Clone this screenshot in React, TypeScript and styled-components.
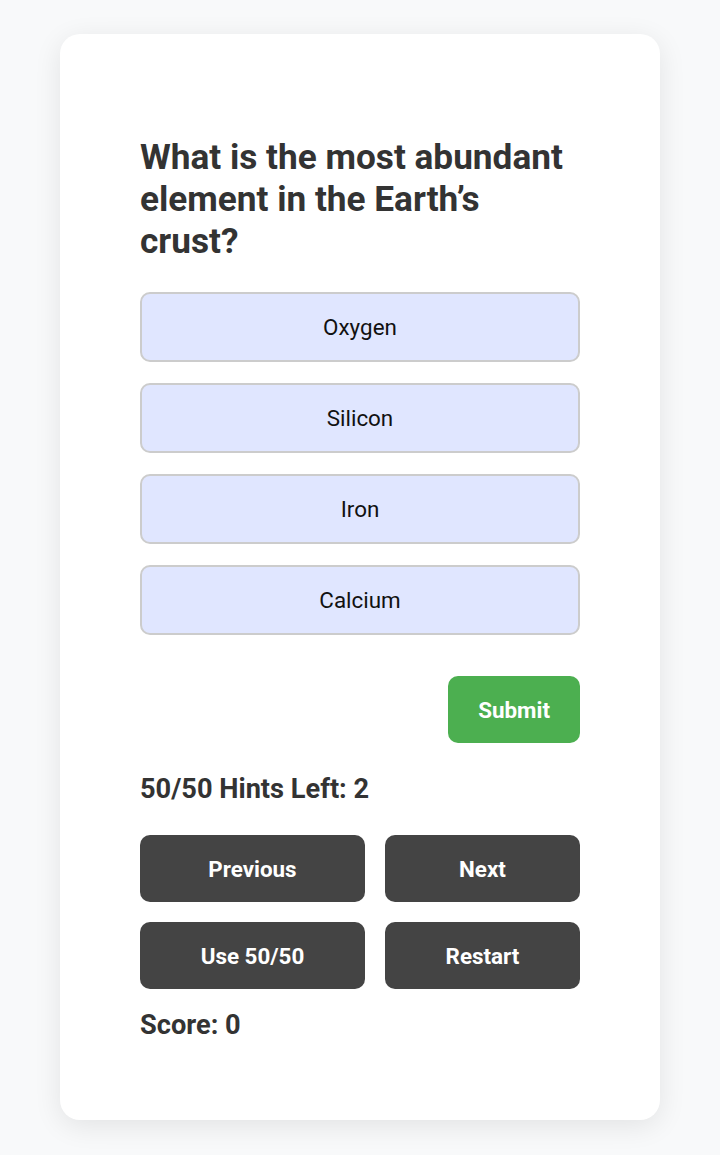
import React, { useState } from "react";
import styled, { createGlobalStyle } from "styled-components";

const GlobalStyle = createGlobalStyle`
  html, body {
    margin: 0;
    padding: 0;
    background: #f8f9fa;
    font-family: Roboto, "Liberation Sans", Arial, sans-serif;
  }
  * { box-sizing: border-box; }
`;

const Page = styled.div`
  display: flex;
  justify-content: center;
  padding: 34px 0 35px;
`;

const Card = styled.div`
  width: 600px;
  background: #ffffff;
  border-radius: 20px;
  box-shadow: 0 6px 28px rgba(0, 0, 0, 0.09);
  padding: 102px 80px 79px;
  display: flex;
  flex-direction: column;
`;

const Question = styled.h2`
  margin: 0 0 30px;
  font-size: 35.2px;
  line-height: 42px;
  font-weight: 700;
  color: #333333;
`;

const Options = styled.div`
  display: flex;
  flex-direction: column;
  gap: 21px;
`;

const Option = styled.button<{ $selected?: boolean }>`
  height: 70px;
  width: 100%;
  display: flex;
  align-items: center;
  justify-content: center;
  background: ${(p) => (p.$selected ? "#c7d2fe" : "#e0e6ff")};
  border: 2px solid #cccccc;
  border-radius: 10px;
  font-family: inherit;
  font-size: 22.4px;
  font-weight: 400;
  color: #111111;
  cursor: pointer;
`;

const SubmitRow = styled.div`
  display: flex;
  justify-content: flex-end;
  margin-top: 41px;
`;

const ActionButton = styled.button<{ $variant?: "green" | "dark" }>`
  height: 67px;
  padding: 0 30px;
  border: none;
  border-radius: 10px;
  background: ${(p) => (p.$variant === "green" ? "#4caf50" : "#444444")};
  color: #ffffff;
  font-family: inherit;
  font-size: 22.4px;
  font-weight: 700;
  cursor: pointer;
`;

const Info = styled.div<{ $top: number; $bottom: number }>`
  margin: ${(p) => p.$top}px 0 ${(p) => p.$bottom}px;
  font-size: 27.2px;
  line-height: 32px;
  font-weight: 700;
  color: #333333;
`;

const ButtonGrid = styled.div`
  display: grid;
  grid-template-columns: auto auto;
  gap: 20px;
`;

const options = ["Oxygen", "Silicon", "Iron", "Calcium"];

export default function App() {
  const [selected, setSelected] = useState<string | null>(null);
  return (
    <>
      <GlobalStyle />
      <Page>
        <Card>
          <Question>What is the most abundant element in the Earth’s crust?</Question>
          <Options>
            {options.map((o) => (
              <Option key={o} $selected={selected === o} onClick={() => setSelected(o)}>
                {o}
              </Option>
            ))}
          </Options>
          <SubmitRow>
            <ActionButton $variant="green">Submit</ActionButton>
          </SubmitRow>
          <Info $top={30} $bottom={30}>50/50 Hints Left: 2</Info>
          <ButtonGrid>
            <ActionButton>Previous</ActionButton>
            <ActionButton>Next</ActionButton>
            <ActionButton>Use 50/50</ActionButton>
            <ActionButton>Restart</ActionButton>
          </ButtonGrid>
          <Info $top={20} $bottom={0}>Score: 0</Info>
        </Card>
      </Page>
    </>
  );
}
